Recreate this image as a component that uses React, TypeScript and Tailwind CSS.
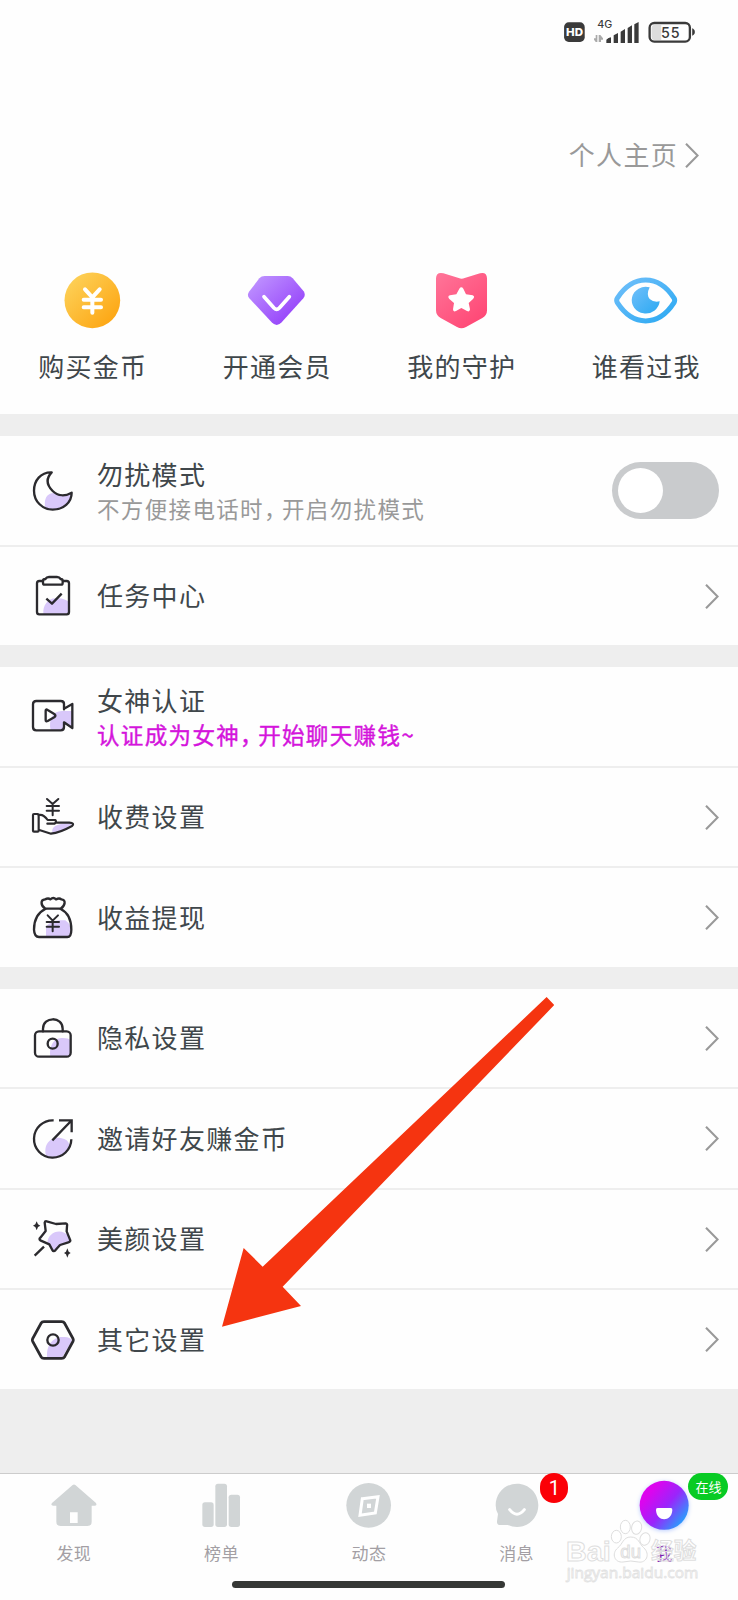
import type { ReactNode } from 'react'

interface IconProps {
  viewBox: string
  children: ReactNode
}

// Контурная иконка строки списка: тёмная линия поверх сиреневого пятна
function LineIcon({ viewBox, children }: IconProps) {
  return (
    <svg
      viewBox={viewBox}
      className="w-12 h-12 flex-shrink-0"
      fill="none"
      stroke="#2b2a2e"
      strokeWidth="7"
      strokeLinecap="round"
      strokeLinejoin="round"
    >
      {children}
    </svg>
  )
}

function Blob({ d }: { d: string }) {
  return <path d={d} fill="#d9c8fa" stroke="none" />
}

function Chevron() {
  return (
    <svg viewBox="0 0 14 25" className="w-3.5 h-[25px] flex-shrink-0" fill="none" stroke="#999" strokeWidth="2.1">
      <path d="M1 .8 12.6 12.5 1 24.2" />
    </svg>
  )
}

const icons = {
  moon: (
    <LineIcon viewBox="87 109 144 144">
      <Blob d="M136 232C130 205 142 187 161 187Q178 199 215 191C211 222 170 250 136 232Z" />
      <path d="M155 125C122 124 102 150 102 180C102 213 128 237 158 237C190 237 215 215 215 186C196 197 174 197 158 181C141 164 137 144 155 125Z" />
    </LineIcon>
  ),
  task: (
    <LineIcon viewBox="87 426 144 144">
      <Blob d="M130 551C128 527 143 505 167 505Q190 502 206 515V551Z" />
      <path d="M129 453H118Q111 453 111 460V546Q111 553 118 553H200Q207 553 207 546V460Q207 453 200 453H189" />
      <path d="M134 464Q129 464 129 458V453Q129 447 136 447Q140 441 147 441H171Q178 441 182 447Q188 447 188 453V458Q188 464 183 464Z" />
      <path d="M139 506 156 521 185 491" strokeLinecap="butt" />
    </LineIcon>
  ),
  video: (
    <LineIcon viewBox="87 127 144 144">
      <Blob d="M152 242C145 210 158 184 185 184H217V235L193 222L187 242Z" />
      <path d="M192 179V163Q192 154 182 154H109Q99 154 99 164V232Q99 242 109 242H182Q192 242 192 232V218L217 235V163L192 177" />
      <path d="M137 183Q137 177 143 181L164 194Q168 198 164 202L143 214Q137 217 137 211Z" />
    </LineIcon>
  ),
  fee: (
    <LineIcon viewBox="87 429 144 144">
      <Blob d="M157 546C155 530 170 519 219 519Q200 538 157 551Z" />
      <path d="M141 447 158 462 175 447M158 462V496M140 468H177M140 482H177" strokeWidth="6" />
      <rect x="99" y="492" width="17" height="53" rx="3" strokeWidth="6.500" />
      <path d="M116 495C130 492 137 501 143 510H166Q171 516 164 521H142M166 518H208Q225 519 216 528C198 538 174 549 153 551L118 540" strokeWidth="6.500" />
    </LineIcon>
  ),
  withdraw: (
    <LineIcon viewBox="87 731 144 144">
      <Blob d="M138 859V832C144 816 165 808 196 810Q214 822 213 848Q213 859 203 859Z" />
      <path d="M136 775C121 765 121 748 135 747Q145 742 151 747Q160 739 168 747Q178 742 184 747C199 748 196 766 182 775Z" />
      <path d="M136 776C115 786 102 808 102 838Q103 860 117 860H202Q214 860 214 838C214 808 203 786 182 776" />
      <path d="M143 795 158 811 174 795M158 811V843M140 815H177M140 829H177" strokeWidth="6" />
    </LineIcon>
  ),
  lock: (
    <LineIcon viewBox="87 101 144 144">
      <Blob d="M151 229C146 201 160 173 184 173Q205 172 211 180V229Z" />
      <path d="M129 153V145C129 108 188 107 188 145V153" />
      <rect x="105" y="153" width="107" height="76" rx="12" />
      <circle cx="158" cy="190" r="15" />
    </LineIcon>
  ),
  invite: (
    <LineIcon viewBox="87 402 144 144">
      <Blob d="M138 524C129 487 155 466 182 471Q207 474 208 495C200 521 160 541 138 524Z" />
      <path d="M161 418A56 56 0 1 0 214 475M177 418H215V454M213 420 157 478" strokeLinecap="butt" strokeLinejoin="miter" />
    </LineIcon>
  ),
  beauty: (
    <LineIcon viewBox="87 704 144 144">
      <Blob d="M142 789C143 754 185 741 206 768L211 784L181 796L163 812Z" />
      <path d="M140 723 168 731 197 729Q203 730 201 737L200 753 211 780Q211 785 205 786L180 794 166 810Q161 815 157 809L148 792 121 780Q116 776 121 772L137 752 134 727Q135 722 140 723Z" />
      <path d="M104 826 132 799" strokeLinecap="butt" />
      <path d="M110 723 114 732 121 736 114 740 110 750 106 740 99 736 106 732ZM202 804 206 814 212 818 206 822 202 832 198 822 192 818 198 814Z" fill="#2b2a2e" stroke="none" />
    </LineIcon>
  ),
  other: (
    <LineIcon viewBox="87 1005 144 144">
      <Blob d="M142 1133C136 1093 160 1066 190 1068Q212 1067 216 1080L184 1133Z" />
      <path d="M132 1022H185Q191 1022 194 1027L219 1073Q221 1077 219 1081L194 1127Q191 1132 185 1132H132Q126 1132 123 1127L98 1081Q96 1077 98 1073L123 1027Q126 1022 132 1022Z" strokeWidth="8.500" />
      <circle cx="159" cy="1077" r="17" />
    </LineIcon>
  ),
}

function StatusBar() {
  return (
    <div className="flex items-start justify-end h-[120px] pt-5 pr-[42px]">
      <svg viewBox="70 60 400 70" className="w-[133.3px] h-[23.3px]" fill="#3a3a3a">
        <rect x="73" y="67" width="62" height="59" rx="14" />
        <text x="79" y="108" textLength="51" lengthAdjust="spacingAndGlyphs" fill="#fff" className="font-['Inter'] font-extrabold text-[33px]">HD</text>
        <text x="173" y="85" textLength="45" lengthAdjust="spacingAndGlyphs" className="font-['Inter'] font-medium text-[29px]">4G</text>
        <path d="M163 115H168V105H173V126H168L163 119ZM177 126V105H182L190 115V119H184V126Z" fill="#aaa" />
        <path d="M200 119Q206 113 214 112V129H200ZM222 106 235 99V129H222ZM243 95 256 87V129H243ZM264 84 277 76V129H264ZM284 73 297 66V129H284Z" />
        <path d="M342 75H365V120H342Q336 118 336 110V84Q336 77 342 75Z" fill="#ddd" />
        <rect x="330" y="69" width="121" height="56" rx="14" fill="none" stroke="#3a3a3a" strokeWidth="7" />
        <path d="M459 86Q465 88 465 96Q465 104 459 106Z" strokeWidth="2" stroke="#3a3a3a" />
        <text x="364" y="113" textLength="56" className="font-['Inter'] font-medium text-[43px]">55</text>
      </svg>
    </div>
  )
}

const shortcuts = [
  {
    label: '购买金币',
    icon: (
      <svg viewBox="176 50 200 200" className="w-[66.7px] h-[66.7px]">
        <linearGradient id="coin" x1="0" y1="0" x2="1" y2="1">
          <stop offset=".1" stopColor="#fdd158" />
          <stop offset=".9" stopColor="#fda512" />
        </linearGradient>
        <circle cx="276" cy="150" r="83.500" fill="url(#coin)" />
        <path d="M254 117 276 141 298 117M276 141V187M250 148H302M250 171H302" fill="none" stroke="#fff" strokeWidth="12" strokeLinecap="round" strokeLinejoin="round" />
      </svg>
    ),
  },
  {
    label: '开通会员',
    icon: (
      <svg viewBox="730 50 200 200" className="w-[66.7px] h-[66.7px]">
        <linearGradient id="gem" x1="0" y1="0" x2="1" y2="1">
          <stop offset=".1" stopColor="#bd90ff" />
          <stop offset=".85" stopColor="#9541fa" />
        </linearGradient>
        <path d="M795 77H864Q873 77 879 84L912 123Q919 135 911 144L846 216Q831 232 816 216L749 144Q741 135 748 124L779 84Q785 77 795 77Z" fill="url(#gem)" />
        <path d="M793 139 823 173Q831 181 839 173L869 139" fill="none" stroke="#fff" strokeWidth="11" strokeLinecap="round" />
      </svg>
    ),
  },
  {
    label: '我的守护',
    icon: (
      <svg viewBox="180 50 200 200" className="w-[66.7px] h-[66.7px]">
        <linearGradient id="guard" x1="0" y1="0" x2=".8" y2="1">
          <stop offset="0" stopColor="#ff7599" />
          <stop offset="1" stopColor="#ff4674" />
        </linearGradient>
        <path d="M226 69 272 83Q281 87 290 83L336 69Q356 64 357 84V180Q357 195 343 203L294 230Q280 238 267 230L218 203Q204 195 204 180V84Q205 64 226 69Z" fill="url(#guard)" />
        <path d="M274 115Q280 107 286 115L294 132 314 135Q322 139 315 146L302 158 306 177Q305 186 297 182L280 173 264 182Q255 186 255 177L258 158 244 146Q237 138 246 135L265 132Z" fill="#fff" />
      </svg>
    ),
  },
  {
    label: '谁看过我',
    icon: (
      <svg viewBox="733 50 200 200" className="w-[66.7px] h-[66.7px]">
        <linearGradient id="eye" x1="0" y1="0" x2="1" y2="1">
          <stop offset="0" stopColor="#70bffa" />
          <stop offset="1" stopColor="#2ba9f2" />
        </linearGradient>
        <path d="M749 143C796 71 872 71 919 143Q923 150 919 157C872 230 796 230 749 157Q745 150 749 143Z" fill="none" stroke="url(#eye)" strokeWidth="15" strokeLinejoin="round" />
        <path d="M846 111Q835 133 846 146Q858 157 876 153A42 40 0 1 1 846 111Z" fill="url(#eye)" />
      </svg>
    ),
  },
]

interface RowProps {
  icon: ReactNode
  title: string
  hint?: ReactNode
  action?: ReactNode
}

function Row({ icon, title, hint, action }: RowProps) {
  return (
    <div className="flex flex-1 items-center bg-[#fefefe] pl-[29px] pr-[19px]">
      {icon}
      <div className={`flex-1 ml-5 whitespace-nowrap ${hint ? 'pt-px' : 'pb-[3px]'}`}>
        <div className="text-[26px] leading-[35px] tracking-[1.3px]">{title}</div>
        {hint}
      </div>
      {action}
    </div>
  )
}

function Comma() {
  return <span className="tracking-[6.8px] [font-feature-settings:'halt']">，</span>
}

function Toggle() {
  return (
    <div className="w-[107px] h-[57px] rounded-full bg-[#c9cbcd] p-[6px]">
      <div className="w-[45px] h-[45px] rounded-full bg-white" />
    </div>
  )
}

const tabs = [
  {
    label: '发现',
    icon: (
      <svg viewBox="146 90 150 150" className="w-[50px] h-[50px]" fill="#d1d5d6">
        <path fillRule="evenodd" d="M217 105Q221 102 225 105L287 159Q291 167 283 167H274V215Q274 228 261 228H181Q168 228 168 215V167H158Q150 166 155 159ZM209 187V219H232V187Z" />
      </svg>
    ),
  },
  {
    label: '榜单',
    icon: (
      <svg viewBox="589 90 150 150" className="w-[50px] h-[50px]" fill="#d1d5d6">
        <rect x="608" y="157" width="34" height="74" rx="8" />
        <rect x="647" y="101" width="35" height="130" rx="8" />
        <rect x="687" y="134" width="34" height="97" rx="8" />
      </svg>
    ),
  },
  {
    label: '动态',
    icon: (
      <svg viewBox="13 15 150 150" className="w-[50px] h-[50px]" fill="#d1d5d6">
        <circle cx="87" cy="91" r="67" />
        <path d="M68 71 115 65 107 114 61 121Z" fill="none" stroke="#fff" strokeWidth="9" />
        <rect x="82" y="86" width="12" height="13" fill="#fff" />
      </svg>
    ),
  },
  {
    label: '消息',
    icon: (
      <svg viewBox="371 90 150 150" className="w-[50px] h-[50px]" fill="#d1d5d6">
        <path d="M382 166C382 130 410 101 446 101C482 101 510 130 510 166C510 202 482 231 446 231Q432 231 419 225H396Q385 225 386 214L389 192Q382 181 382 166Z" />
        <path d="M424 179Q446 206 468 179" fill="none" stroke="#fff" strokeWidth="9" strokeLinecap="round" />
      </svg>
    ),
    badge: (
      <span className="absolute left-[97.5px] -top-[1px] w-7 h-[30px] rounded-full bg-[#fb0007] text-white text-xl leading-[30px] text-center font-['Roboto']">
        1
      </span>
    ),
  },
  {
    label: '我',
    active: true,
    icon: (
      <svg viewBox="814 90 150 150" className="w-[50px] h-[50px] overflow-visible drop-shadow-[0_1px_2px_#b9ccff]">
        <linearGradient id="me" x1=".1" y1=".2" x2=".95" y2=".9">
          <stop offset=".1" stopColor="#dc05ee" />
          <stop offset=".5" stopColor="#9a25fb" />
          <stop offset="1" stopColor="#13b4fd" />
        </linearGradient>
        <circle cx="889.500" cy="166" r="73.500" fill="url(#me)" />
        <path d="M870 174H909Q915 174 914 181C912 217 867 217 865 181Q864 174 870 174Z" fill="#fff" />
      </svg>
    ),
    badge: (
      <span className="absolute left-[98px] -top-[1px] w-10 h-[27px] rounded-full bg-[#08cb24] text-white text-[13px] leading-[27px] text-center whitespace-nowrap">
        在线
      </span>
    ),
  },
]

function Watermark() {
  return (
    <svg
      viewBox="590 205 405 195"
      className="absolute left-[564.7px] top-[1518.3px] w-[135px] h-[65px]"
      fill="#fff"
      fillOpacity=".6"
      stroke="#dedede"
      strokeWidth="3"
    >
      <text x="593" y="334" textLength="134" lengthAdjust="spacingAndGlyphs" className="font-['Liberation_Sans'] font-bold text-[84px]">Bai</text>
      <ellipse cx="744" cy="261" rx="15" ry="19" />
      <ellipse cx="771" cy="232" rx="15" ry="20" />
      <ellipse cx="805" cy="234" rx="15" ry="20" transform="rotate(10 805 234)" />
      <ellipse cx="830" cy="268" rx="15" ry="19" transform="rotate(18 830 268)" />
      <path d="M787 262C812 262 812 283 826 294C848 315 832 341 811 337Q787 331 764 337C738 340 729 311 748 295C763 284 764 262 787 262Z" />
      <text x="756" y="326" textLength="62" lengthAdjust="spacingAndGlyphs" className="font-['Liberation_Sans'] text-[54px]">du</text>
      <text x="848" y="328" textLength="136" lengthAdjust="spacingAndGlyphs" fillOpacity=".35" className="font-bold text-[68px]">经验</text>
      <text x="595" y="386" textLength="395" lengthAdjust="spacingAndGlyphs" stroke="#e2e2e2" strokeWidth="2.500" className="font-['Open_Sans'] text-[46px]">jingyan.baidu.com</text>
    </svg>
  )
}

export default function App() {
  return (
    <div className="relative w-[738px] h-[1600px] overflow-hidden flex flex-col bg-[#eee] text-[#40474b] font-['Noto_Sans_CJK_SC',sans-serif]">
      <header className="h-[414px] bg-[#fefefe]">
        <StatusBar />
        <div className="flex items-center justify-end h-[70px] pr-[39px] gap-[7px] text-[#999]">
          <span className="pb-[4px] text-[26px] leading-[35px] tracking-[1.3px]">个人主页</span>
          <Chevron />
        </div>
        <div className="grid grid-cols-4 pt-[77px]">
          {shortcuts.map(s => (
            <div key={s.label} className="flex flex-col items-center">
              {s.icon}
              <span className="mt-[14px] ml-px text-[26px] leading-[35px] tracking-[1.3px]">{s.label}</span>
            </div>
          ))}
        </div>
      </header>

      <section className="mt-[22px] h-[209px] flex flex-col gap-0.5">
        <div className="flex h-[109px]">
          <Row
            icon={icons.moon}
            title="勿扰模式"
            hint={
              <div className="text-[22.5px] leading-[35px] tracking-[1.35px] text-[#999]">
                不方便接电话时<Comma />开启勿扰模式
              </div>
            }
            action={<Toggle />}
          />
        </div>
        <Row icon={icons.task} title="任务中心" action={<Chevron />} />
      </section>

      <section className="mt-[22px] h-[300px] flex flex-col gap-0.5">
        <Row
          icon={icons.video}
          title="女神认证"
          hint={
            <div className="text-[22.5px] leading-[35px] tracking-[1.35px] text-[#d414dc] [-webkit-text-stroke:.4px_#d414dc]">
              认证成为女神<Comma />开始聊天赚钱~
            </div>
          }
        />
        <Row icon={icons.fee} title="收费设置" action={<Chevron />} />
        <Row icon={icons.withdraw} title="收益提现" action={<Chevron />} />
      </section>

      <section className="mt-[22px] grid grid-rows-[98px_99px_98px_99px] gap-0.5">
        <Row icon={icons.lock} title="隐私设置" action={<Chevron />} />
        <Row icon={icons.invite} title="邀请好友赚金币" action={<Chevron />} />
        <Row icon={icons.beauty} title="美颜设置" action={<Chevron />} />
        <Row icon={icons.other} title="其它设置" action={<Chevron />} />
      </section>

      <nav className="mt-auto h-[127px] border-t border-[#ccc] bg-[#fefefe]">
        <div className="grid grid-cols-5 h-[107px]">
          {tabs.map(t => (
            <div key={t.label} className="relative flex flex-col items-center pt-[6px]">
              {t.icon}
              <span className={`mt-[11px] text-[17px] leading-6 tracking-[.4px] ${t.active ? 'text-[#7d1bb0]' : 'text-[#a39fa4]'}`}>
                {t.label}
              </span>
              {t.badge}
            </div>
          ))}
        </div>
        <div className="ml-[232px] w-[273px] h-[7px] rounded-full bg-[#363836]" />
      </nav>

      <svg viewBox="66 52 997 989" className="absolute left-[222px] top-[997.3px] w-[332.3px] h-[329.7px]">
        <path d="M1040 52 1063 76 248 921 303 979 66 1041 131 805 188 861Z" fill="#f53410" />
      </svg>
      <Watermark />
    </div>
  )
}
